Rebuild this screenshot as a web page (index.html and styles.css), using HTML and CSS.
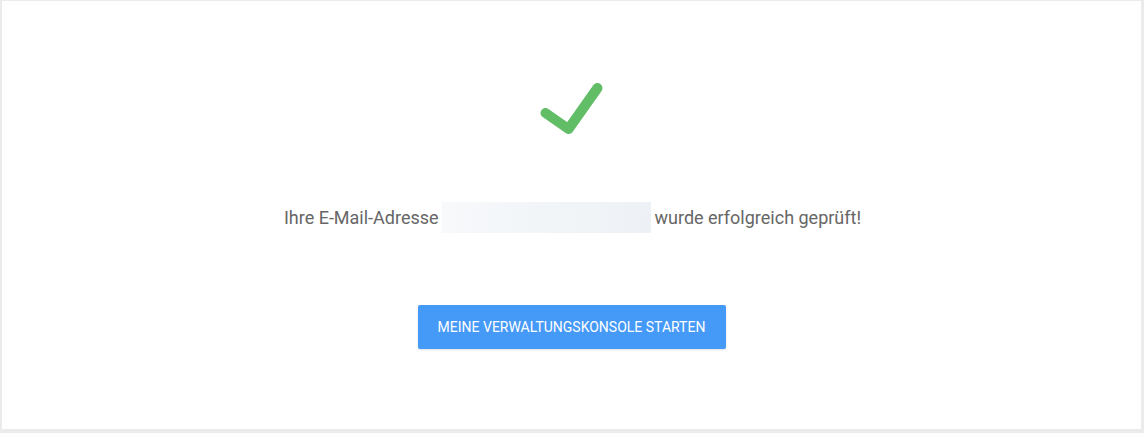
FILE: index.html
```html
<!DOCTYPE html>
<html lang="de">
<head>
<meta charset="utf-8">
<title>E-Mail bestätigt</title>
<link rel="stylesheet" href="styles.css">
</head>
<body>
<div class="frame">
  <main class="card">
    <div class="check">
      <svg width="70" height="60" viewBox="0 0 70 60">
        <path d="M8.5 32 L31.5 48 L60.5 7" fill="none" stroke="#62bd67" stroke-width="10" stroke-linecap="round" stroke-linejoin="round"/>
      </svg>
    </div>
    <p class="message">Ihre E-Mail-Adresse <span class="mask"></span> wurde erfolgreich geprüft!</p>
    <button class="btn">MEINE VERWALTUNGSKONSOLE STARTEN</button>
  </main>
</div>
</body>
</html>
```
FILE: styles.css
```css
html, body {
  margin: 0;
  padding: 0;
  background: #ebebeb;
  font-family: Roboto, "Liberation Sans", sans-serif;
}
.frame {
  width: 1144px;
  height: 433px;
  box-sizing: border-box;
  padding: 1px 3px 4px 2px;
}
.card {
  background: #fff;
  height: 100%;
  display: flex;
  flex-direction: column;
  align-items: center;
}
.check {
  margin-top: 80px;
  margin-left: 1px;
  height: 60px;
}
.check svg { display: block; }
.message {
  margin: 61px 0 0 2px;
  font-size: 18px;
  line-height: 31px;
  color: #666;
  display: flex;
  align-items: center;
  white-space: pre;
}
.mask {
  display: inline-block;
  width: 209px;
  height: 31px;
  background: linear-gradient(100deg, #f7f9fb, #edf1f5);
  margin: 0 -1px 0 -1px;
}
.btn {
  margin-top: 72px;
  width: 308px;
  height: 44px;
  border: none;
  border-radius: 2px;
  background: #4599f7;
  color: #fff;
  font-family: Roboto, "Liberation Sans", sans-serif;
  font-size: 14px;
  letter-spacing: 0;
  box-shadow: 0 1px 2px rgba(0,0,0,0.12);
  padding: 0;
}
```
